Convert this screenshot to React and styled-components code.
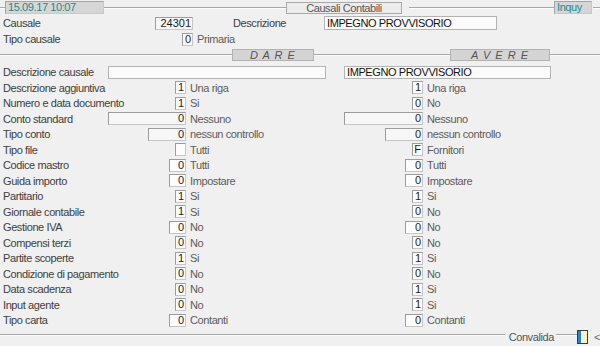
import React from 'react'
import styled, { createGlobalStyle } from 'styled-components'

const rows = [
  { label: 'Descrizione aggiuntiva', d: ['1', 11, 'Una riga'], a: ['1', 11, 'Una riga'] },
  { label: 'Numero e data documento', d: ['1', 11, 'Si'], a: ['0', 11, 'No'] },
  { label: 'Conto standard', d: ['0', 78, 'Nessuno'], a: ['0', 79, 'Nessuno'] },
  { label: 'Tipo conto', d: ['0', 38, 'nessun controllo'], a: ['0', 38, 'nessun controllo'] },
  { label: 'Tipo file', d: ['', 11, 'Tutti'], a: ['F', 11, 'Fornitori'] },
  { label: 'Codice mastro', d: ['0', 17, 'Tutti'], a: ['0', 18, 'Tutti'] },
  { label: 'Guida importo', d: ['0', 17, 'Impostare'], a: ['0', 18, 'Impostare'] },
  { label: 'Partitario', d: ['1', 11, 'Si'], a: ['1', 11, 'Si'] },
  { label: 'Giornale contabile', d: ['1', 11, 'Si'], a: ['0', 11, 'No'] },
  { label: 'Gestione IVA', d: ['0', 17, 'No'], a: ['0', 18, 'No'] },
  { label: 'Compensi terzi', d: ['0', 11, 'No'], a: ['0', 11, 'No'] },
  { label: 'Partite scoperte', d: ['1', 11, 'Si'], a: ['1', 11, 'Si'] },
  { label: 'Condizione di pagamento', d: ['0', 11, 'No'], a: ['0', 11, 'No'] },
  { label: 'Data scadenza', d: ['0', 11, 'No'], a: ['1', 11, 'Si'] },
  { label: 'Input agente', d: ['0', 11, 'No'], a: ['1', 11, 'Si'] },
  { label: 'Tipo carta', d: ['0', 17, 'Contanti'], a: ['0', 18, 'Contanti'] },
]

function App() {
  return (
    <>
      <GlobalStyle />
      <Screen>
        <TopBar>
          <Line width={5} />
          <TagBox width={99}>15.09.17 10:07</TagBox>
          <Line width={182} />
          <TitleBox>Causali Contabili</TitleBox>
          <Line width={145} style={{ marginLeft: 7 }} />
          <TagBox width={38}>Inquy</TagBox>
          <Line style={{ marginLeft: 1 }} />
        </TopBar>

        <HeadRow>
          <Label>Causale</Label>
          <Field width={38}>24301</Field>
          <Label style={{ paddingLeft: 40 }}>Descrizione</Label>
          <TextField width={173}>IMPEGNO PROVVISORIO</TextField>
        </HeadRow>
        <HeadRow>
          <Label>Tipo causale</Label>
          <Field width={11}>0</Field>
          <Hint>Primaria</Hint>
        </HeadRow>

        <Divider>
          <Line width={232} />
          <SideBox width={82}>D A R E</SideBox>
          <Line width={136} />
          <SideBox width={100}>A V E R E</SideBox>
          <Line />
        </Divider>

        <Grid>
          <Label>Descrizione causale</Label>
          <DescField width={218} />
          <DescField width={207}>IMPEGNO PROVVISORIO</DescField>
          {rows.map(r => (
            <React.Fragment key={r.label}>
              <Label>{r.label}</Label>
              <Field width={r.d[1]}>{r.d[0]}</Field>
              <Hint>{r.d[2]}</Hint>
              <Field width={r.a[1]}>{r.a[0]}</Field>
              <Hint>{r.a[2]}</Hint>
            </React.Fragment>
          ))}
        </Grid>

        <Footer>
          <Line />
          <Convalida>Convalida</Convalida>
          <Line width={21} />
          <ValidIcon>
            <span />
          </ValidIcon>
          <Back>&lt;</Back>
        </Footer>
      </Screen>
    </>
  )
}

export default App

const GlobalStyle = createGlobalStyle`
  body {
    margin: 0;
    background: #f0f0f0;
  }
`

const Screen = styled.div`
  width: 600px;
  height: 346px;
  overflow: hidden;
  background: #f0f0f0;
  font-family: "Liberation Sans", Arial, sans-serif;
  font-size: 11px;
  letter-spacing: -0.4px;
  color: #444;
`

const Line = styled.div`
  flex: ${p => (p.width ? `0 0 ${p.width}px` : '1')};
  height: 0;
  border-top: 1px solid #a8a8a8;
  border-bottom: 1px solid #fdfdfd;
`

const TopBar = styled.div`
  height: 15px;
  display: flex;
  align-items: center;
`

const TagBox = styled.div`
  width: ${p => p.width}px;
  height: 13px;
  box-sizing: border-box;
  line-height: 11px;
  padding-left: 2px;
  background: #d6d6d6;
  border: 1px solid #a4a4a4;
  border-right-color: #c8c8c8;
  border-bottom-color: #c8c8c8;
  color: #238a8c;
  white-space: nowrap;
`

const TitleBox = styled.div`
  width: 116px;
  height: 12px;
  box-sizing: border-box;
  line-height: 10px;
  background: #ececec;
  border: 1px solid #a8a8a8;
  color: #555;
  text-align: center;
`

const HeadRow = styled.div`
  height: 16px;
  padding-left: 3px;
  display: grid;
  grid-template-columns: 152px 38px 131px 1fr;
  align-items: center;
  &:first-of-type {
    margin-top: 1px;
  }
`

const Label = styled.div`
  color: #3e3e3e;
  white-space: nowrap;
`

const Hint = styled.div`
  color: #5c5c5c;
  padding-left: 4px;
  white-space: nowrap;
`

const Field = styled.div`
  justify-self: end;
  width: ${p => p.width}px;
  height: 13px;
  box-sizing: border-box;
  border: 1px solid #c6c6c6;
  border-top-color: #9c9c9c;
  border-left-color: #9c9c9c;
  background: ${p => (p.width > 30 ? '#f7f7f7' : '#fcfcfc')};
  color: #1c1c1c;
  text-align: right;
  line-height: 11px;
  padding-right: 1px;
  letter-spacing: 0;
`

const TextField = styled.div`
  width: ${p => p.width}px;
  height: 14px;
  box-sizing: border-box;
  border: 1px solid #b4b4b4;
  background: #fbfbfb;
  color: #111;
  line-height: 12px;
  padding-left: 2px;
`

const Divider = styled.div`
  height: 14px;
  margin-top: 1px;
  display: flex;
  align-items: center;
`

const SideBox = styled.div`
  width: ${p => p.width}px;
  height: 12px;
  box-sizing: border-box;
  background: #d4d4d4;
  border: 1px solid #b2b2b2;
  color: #555;
  font-style: italic;
  font-size: 11px;
  line-height: 10px;
  text-align: center;
  letter-spacing: 1px;
`

const Grid = styled.div`
  margin-top: 2.5px;
  padding-left: 3px;
  display: grid;
  grid-template-columns: 105px 78px 158px 79px 1fr;
  grid-auto-rows: 15.5px;
  align-items: center;
`

const DescField = styled(TextField)`
  grid-column: span 2;
  height: 13px;
  line-height: 11px;
`

const Footer = styled.div`
  height: 14px;
  margin-top: 2px;
  display: flex;
  align-items: center;
  ${Line} {
    align-self: flex-start;
    margin-top: 4px;
  }
`

const Convalida = styled.div`
  color: #555;
  padding: 0 2px 0 4px;
`

const ValidIcon = styled.div`
  width: 11px;
  height: 14px;
  box-sizing: border-box;
  border: 1px solid #3a3a3a;
  background: #fbf6c4;
  span {
    display: block;
    width: 3px;
    height: 100%;
    background: #2c7fd0;
  }
`

const Back = styled.div`
  color: #666;
  padding-left: 6px;
`
